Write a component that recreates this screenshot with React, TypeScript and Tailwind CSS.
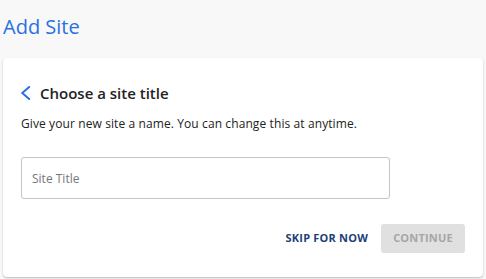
import React from "react";

export default function App() {
  return (
    <div
      className="w-[486px] h-[279px] bg-[#f8f8f8] px-[3px] overflow-hidden"
      style={{ fontFamily: '"Open Sans", "Noto Sans", sans-serif' }}
    >
      <h1 className="pt-[12px] text-[20px] leading-[30px] text-[#2a71df] font-normal">Add Site</h1>
      <div className="mt-[16px] bg-white rounded-[4px] shadow-[0_1px_2px_rgba(0,0,0,0.25)] px-[18px] pt-[24px] pb-[24px]">
        <div className="flex items-center gap-[9px]">
          <svg width="10" height="14" viewBox="0 0 10 14" fill="none" className="shrink-0">
            <path d="M8.2 1L1.2 7L8.2 13" stroke="#2a71df" strokeWidth="2" strokeLinecap="round" strokeLinejoin="round" />
          </svg>
          <h2 className="text-[15px] leading-[22px] font-semibold text-[#222]">Choose a site title</h2>
        </div>
        <p className="mt-[12px] text-[12px] leading-[16px] text-[#222] tracking-[0.1px]">
          Give your new site a name. You can change this at anytime.
        </p>
        <input
          type="text"
          placeholder="Site Title"
          className="mt-[25px] block w-[369px] h-[42px] rounded-[3px] border border-[#c4c4c4] px-[10px] text-[12px] text-[#222] placeholder:text-[#777] outline-none"
        />
        <div className="mt-[25px] flex items-center justify-end gap-[13px]">
          <button className="text-[11px] font-bold text-[#1d3f7a] tracking-[0.2px]">SKIP FOR NOW</button>
          <button
            disabled
            className="w-[84px] h-[29px] rounded-[3px] bg-[#e0e0e0] text-[11px] font-bold text-[#a6a6a6] tracking-[0.2px]"
          >
            CONTINUE
          </button>
        </div>
      </div>
    </div>
  );
}
